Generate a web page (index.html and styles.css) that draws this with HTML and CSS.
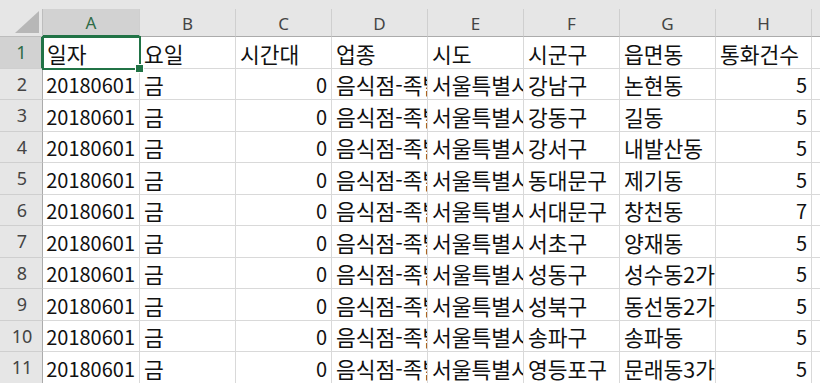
FILE: index.html
```html
<!DOCTYPE html>
<html lang="ko">
<head>
<meta charset="utf-8">
<title>Sheet</title>
<link rel="stylesheet" href="styles.css">
</head>
<body>
<div class="sheet">
  <div class="strip"></div>
  <div class="grid">
    <div class="corner"><span class="tri"></span></div>
    <div class="ch sel">A</div><div class="ch">B</div><div class="ch">C</div><div class="ch">D</div><div class="ch">E</div><div class="ch">F</div><div class="ch">G</div><div class="ch">H</div><div class="ch last"></div>

    <div class="rh sel">1</div>
    <div class="c active">일자</div><div class="c">요일</div><div class="c">시간대</div><div class="c">업종</div><div class="c">시도</div><div class="c">시군구</div><div class="c">읍면동</div><div class="c">통화건수</div><div class="c"></div>

    <div class="rh">2</div>
    <div class="c n">20180601</div><div class="c">금</div><div class="c n">0</div><div class="c">음식점-족발/보쌈</div><div class="c">서울특별시</div><div class="c">강남구</div><div class="c">논현동</div><div class="c n">5</div><div class="c"></div>

    <div class="rh">3</div>
    <div class="c n">20180601</div><div class="c">금</div><div class="c n">0</div><div class="c">음식점-족발/보쌈</div><div class="c">서울특별시</div><div class="c">강동구</div><div class="c">길동</div><div class="c n">5</div><div class="c"></div>

    <div class="rh">4</div>
    <div class="c n">20180601</div><div class="c">금</div><div class="c n">0</div><div class="c">음식점-족발/보쌈</div><div class="c">서울특별시</div><div class="c">강서구</div><div class="c">내발산동</div><div class="c n">5</div><div class="c"></div>

    <div class="rh">5</div>
    <div class="c n">20180601</div><div class="c">금</div><div class="c n">0</div><div class="c">음식점-족발/보쌈</div><div class="c">서울특별시</div><div class="c">동대문구</div><div class="c">제기동</div><div class="c n">5</div><div class="c"></div>

    <div class="rh">6</div>
    <div class="c n">20180601</div><div class="c">금</div><div class="c n">0</div><div class="c">음식점-족발/보쌈</div><div class="c">서울특별시</div><div class="c">서대문구</div><div class="c">창천동</div><div class="c n">7</div><div class="c"></div>

    <div class="rh">7</div>
    <div class="c n">20180601</div><div class="c">금</div><div class="c n">0</div><div class="c">음식점-족발/보쌈</div><div class="c">서울특별시</div><div class="c">서초구</div><div class="c">양재동</div><div class="c n">5</div><div class="c"></div>

    <div class="rh">8</div>
    <div class="c n">20180601</div><div class="c">금</div><div class="c n">0</div><div class="c">음식점-족발/보쌈</div><div class="c">서울특별시</div><div class="c">성동구</div><div class="c">성수동2가</div><div class="c n">5</div><div class="c"></div>

    <div class="rh">9</div>
    <div class="c n">20180601</div><div class="c">금</div><div class="c n">0</div><div class="c">음식점-족발/보쌈</div><div class="c">서울특별시</div><div class="c">성북구</div><div class="c">동선동2가</div><div class="c n">5</div><div class="c"></div>

    <div class="rh">10</div>
    <div class="c n">20180601</div><div class="c">금</div><div class="c n">0</div><div class="c">음식점-족발/보쌈</div><div class="c">서울특별시</div><div class="c">송파구</div><div class="c">송파동</div><div class="c n">5</div><div class="c"></div>

    <div class="rh">11</div>
    <div class="c n">20180601</div><div class="c">금</div><div class="c n">0</div><div class="c">음식점-족발/보쌈</div><div class="c">서울특별시</div><div class="c">영등포구</div><div class="c">문래동3가</div><div class="c n">5</div><div class="c"></div>
  </div>
</div>
</body>
</html>
```
FILE: styles.css
```css
* { box-sizing: border-box; }
html, body { margin: 0; padding: 0; background: #fff; }
body { width: 820px; height: 383px; overflow: hidden; }

.sheet { width: 820px; height: 383px; overflow: hidden; }

.strip { height: 9px; background: #e6e6e6; }

.grid {
  display: grid;
  grid-template-columns: 43px 97px 96px 96px 96px 96px 96px 96px 96px 60px;
  grid-template-rows: 28px repeat(11, 31.5px);
  width: 880px;
}

.corner {
  position: relative;
  background: #e6e6e6;
  border-right: 1px solid #bdbdbd;
  border-bottom: 1px solid #bdbdbd;
}
.tri {
  position: absolute;
  right: 3px;
  bottom: 3px;
  width: 24px;
  height: 22px;
  background: #b7b7b7;
  clip-path: polygon(100% 0, 100% 100%, 0 100%);
}

.ch {
  background: #e6e6e6;
  border-right: 1px solid #cfcfcf;
  border-bottom: 1px solid #ababab;
  display: flex;
  align-items: center;
  justify-content: center;
  font-family: "Noto Sans", "Open Sans", sans-serif;
  font-size: 17px;
  color: #444;
  padding-top: 1px;
}
.ch.sel {
  background: #d2d2d2;
  border-bottom: 2px solid #217346;
  color: #2f6b47;
}
.ch.last { border-right: none; }

.rh {
  background: #e6e6e6;
  border-right: 1px solid #ababab;
  border-bottom: 1px solid #cfcfcf;
  display: flex;
  align-items: center;
  justify-content: center;
  font-family: "Noto Sans", "Open Sans", sans-serif;
  font-size: 18px;
  color: #444;
  padding-left: 2px;
}
.rh.sel {
  background: #d2d2d2;
  border-right: 2px solid #217346;
  color: #2f6b47;
}

.c {
  border-right: 1px solid #d9d9d9;
  border-bottom: 1px solid #d9d9d9;
  display: flex;
  align-items: center;
  padding: 2px 3px 0 4px;
  font-family: "Malgun Gothic", "Noto Sans CJK KR", sans-serif;
  font-size: 21.5px;
  color: #111;
  white-space: nowrap;
  overflow: hidden;
  min-width: 0;
}
.c.n { justify-content: flex-end; padding-right: 4px; font-size: 20px; }

.c.active { position: relative; overflow: visible; }
.c.active::before {
  content: "";
  position: absolute;
  left: -1px;
  top: -1px;
  right: -2px;
  bottom: -2px;
  border: 2px solid #217346;
  pointer-events: none;
}
.c.active::after {
  content: "";
  position: absolute;
  right: -5px;
  bottom: -5px;
  width: 7px;
  height: 7px;
  background: #217346;
  border: 1px solid #fff;
}
```
